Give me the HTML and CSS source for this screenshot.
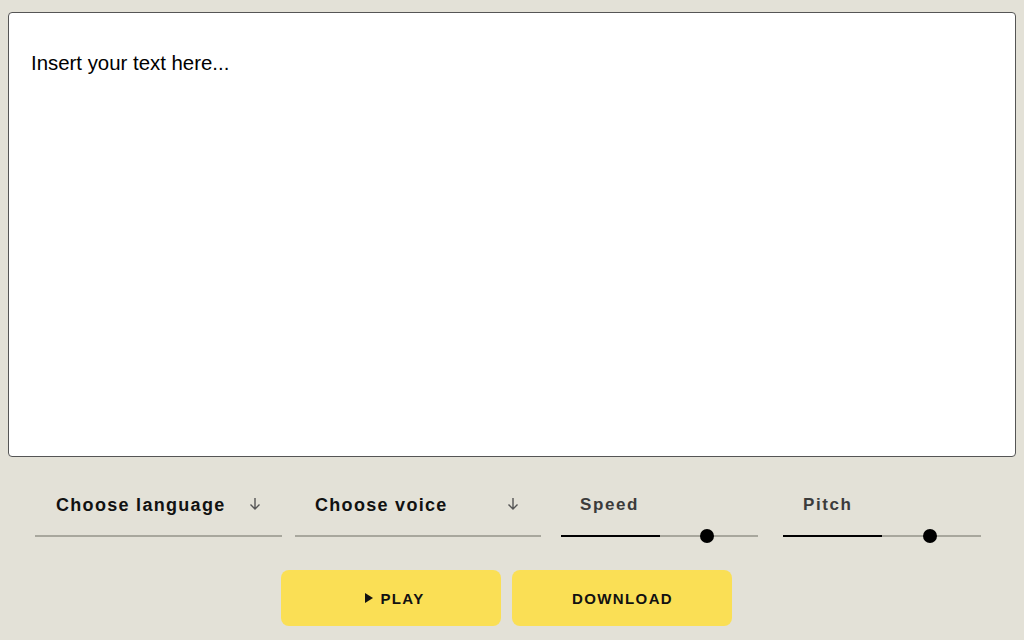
FILE: index.html
```html
<!DOCTYPE html>
<html>
<head>
<meta charset="utf-8">
<link rel="stylesheet" href="styles.css">
</head>
<body>
<main class="app">
  <div class="editor">Insert your text here...</div>
  <div class="controls">
    <div class="select sel-lang">
      <span class="sel-label">Choose language</span>
      <svg class="arrow" width="14" height="14" viewBox="0 0 14 14"><path d="M7 1 V12 M2.5 7.5 L7 12 L11.5 7.5" fill="none" stroke="#555" stroke-width="1.4"/></svg>
    </div>
    <div class="select sel-voice">
      <span class="sel-label">Choose voice</span>
      <svg class="arrow" width="14" height="14" viewBox="0 0 14 14"><path d="M7 1 V12 M2.5 7.5 L7 12 L11.5 7.5" fill="none" stroke="#555" stroke-width="1.4"/></svg>
    </div>
    <div class="slider sl-speed">
      <span class="sl-label">Speed</span>
      <div class="track"><div class="fill"></div><div class="thumb"></div></div>
    </div>
    <div class="slider sl-pitch">
      <span class="sl-label">Pitch</span>
      <div class="track"><div class="fill"></div><div class="thumb thumb-pitch"></div></div>
    </div>
  </div>
  <div class="actions">
    <button class="btn btn-play"><span class="tri"></span>PLAY</button>
    <button class="btn">DOWNLOAD</button>
  </div>
</main>
</body>
</html>
```
FILE: styles.css
```css
html, body {
  margin: 0;
  padding: 0;
  background: #e3e1d7;
  font-family: "Liberation Sans", Arial, sans-serif;
}
.app {
  padding: 12px 8px 0 8px;
}
.editor {
  height: 404px;
  background: #fff;
  border: 1px solid #555;
  border-radius: 4px;
  padding: 39px 22px 0 22px;
  font-size: 20.4px;
  color: #000;
  line-height: 23px;
}
.controls {
  display: flex;
  align-items: flex-start;
  padding-left: 27px;
  margin-top: 33px;
}
.select {
  height: 47px;
  border-bottom: 2px solid #a8a79d;
  display: flex;
  justify-content: space-between;
  padding: 5px 20px 0 21px;
  box-sizing: border-box;
  align-items: flex-start;
}
.sel-lang { width: 247px; }
.sel-voice { width: 246px; margin-left: 13px; padding-left: 20px; padding-right: 21px; }
.sel-label {
  font-weight: bold;
  font-size: 18px;
  letter-spacing: 1.3px;
  color: #111;
  line-height: 20px;
}
.arrow { display: block; margin-top: 2px; }
.slider {
  width: 197px;
  display: flex;
  flex-direction: column;
}
.sl-speed { margin-left: 20px; }
.sl-pitch { margin-left: 25px; width: 198px; }
.sl-label {
  font-weight: bold;
  font-size: 17px;
  letter-spacing: 1.6px;
  color: #3b3b3b;
  padding-left: 19px;
  height: 20px;
  line-height: 20px;
  margin-top: 5px;
}
.sl-pitch .sl-label { padding-left: 20px; }
.track {
  position: relative;
  height: 2px;
  background: #a8a79d;
  margin-top: 20px;
}
.fill {
  width: 50%;
  height: 100%;
  background: #000;
}
.thumb {
  position: absolute;
  left: 139px;
  top: -6px;
  width: 14px;
  height: 14px;
  border-radius: 50%;
  background: #000;
}
.thumb-pitch { left: 140px; }
.actions {
  display: flex;
  gap: 11px;
  padding-left: 273px;
  margin-top: 33px;
}
.btn {
  width: 220px;
  height: 56px;
  border: none;
  border-radius: 8px;
  background: #fadf55;
  font-family: "Liberation Sans", Arial, sans-serif;
  font-weight: bold;
  font-size: 15px;
  letter-spacing: 1.4px;
  color: #111;
  display: flex;
  align-items: center;
  justify-content: center;
  padding: 0 0 0 1px;
}
.btn-play { padding-left: 8px; }
.tri {
  width: 0;
  height: 0;
  border-top: 5px solid transparent;
  border-bottom: 5px solid transparent;
  border-left: 8px solid #111;
  margin-right: 7px;
}
```
